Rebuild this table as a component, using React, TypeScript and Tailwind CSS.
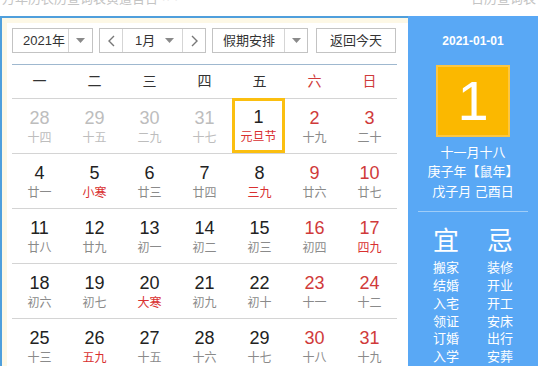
import { clsx as cn } from "clsx";

type Day = { d: number; l: string; muted?: boolean; red?: boolean; term?: boolean; selected?: boolean };

const weeks: Day[][] = [
  [
    { d: 28, l: "十四", muted: true },
    { d: 29, l: "十五", muted: true },
    { d: 30, l: "二九", muted: true },
    { d: 31, l: "十七", muted: true },
    { d: 1, l: "元旦节", term: true, selected: true },
    { d: 2, l: "十九", red: true },
    { d: 3, l: "二十", red: true },
  ],
  [
    { d: 4, l: "廿一" },
    { d: 5, l: "小寒", term: true },
    { d: 6, l: "廿三" },
    { d: 7, l: "廿四" },
    { d: 8, l: "三九", term: true },
    { d: 9, l: "廿六", red: true },
    { d: 10, l: "廿七", red: true },
  ],
  [
    { d: 11, l: "廿八" },
    { d: 12, l: "廿九" },
    { d: 13, l: "初一" },
    { d: 14, l: "初二" },
    { d: 15, l: "初三" },
    { d: 16, l: "初四", red: true },
    { d: 17, l: "四九", red: true, term: true },
  ],
  [
    { d: 18, l: "初六" },
    { d: 19, l: "初七" },
    { d: 20, l: "大寒", term: true },
    { d: 21, l: "初九" },
    { d: 22, l: "初十" },
    { d: 23, l: "十一", red: true },
    { d: 24, l: "十二", red: true },
  ],
  [
    { d: 25, l: "十三" },
    { d: 26, l: "五九", term: true },
    { d: 27, l: "十五" },
    { d: 28, l: "十六" },
    { d: 29, l: "十七" },
    { d: 30, l: "十八", red: true },
    { d: 31, l: "十九", red: true },
  ],
];

const weekdays = ["一", "二", "三", "四", "五", "六", "日"];
const yi = ["搬家", "结婚", "入宅", "领证", "订婚", "入学"];
const ji = ["装修", "开业", "开工", "安床", "出行", "安葬"];

function Caret() {
  return (
    <svg width="9" height="5" viewBox="0 0 9 5">
      <polygon points="0,0 9,0 4.5,5" fill="#8a8a8a" />
    </svg>
  );
}

function Chevron({ dir }: { dir: "left" | "right" }) {
  return (
    <svg width="7" height="12" viewBox="0 0 7 12">
      <polyline
        points={dir === "left" ? "6,1 1,6 6,11" : "1,1 6,6 1,11"}
        fill="none"
        stroke="#777"
        strokeWidth="1.4"
      />
    </svg>
  );
}

export default function App() {
  return (
    <div
      className="relative h-[366px] w-[538px] overflow-hidden bg-white text-[#333]"
      style={{ fontFamily: '"Liberation Sans", "Noto Sans CJK SC", sans-serif' }}
    >
      <div className="h-[16px] overflow-hidden">
        <div className="-mt-[11px] flex justify-between px-[2px] text-[13px] text-[#c4c4c4]">
          <span>万年历农历查询表黄道吉日 ·· ·</span>
          <span>日历查询表</span>
        </div>
      </div>

      <div className="flex h-[350px]">
        <div className="w-[408px] border-l-2 border-t-2 border-[#4f9fdc] bg-[#fdf8e6] pl-[5px] pt-[5px]">
          <div className="h-full bg-white pl-[5px] pr-[4px] pt-[5px]">
            <div className="flex h-[25px] items-stretch gap-[6px] text-[13px]">
              <div className="flex w-[81px] border border-[#c3c3c3]">
                <span className="flex flex-1 items-center pl-[10px]">2021年</span>
                <span className="flex w-[24px] items-center justify-center border-l border-[#d5d5d5]">
                  <Caret />
                </span>
              </div>
              <div className="flex w-[107px] border border-[#c3c3c3]">
                <span className="flex w-[23px] items-center justify-center border-r border-[#d5d5d5]">
                  <Chevron dir="left" />
                </span>
                <span className="flex flex-1 items-center justify-between pl-[12px] pr-[8px]">
                  1月
                  <Caret />
                </span>
                <span className="flex w-[23px] items-center justify-center border-l border-[#d5d5d5]">
                  <Chevron dir="right" />
                </span>
              </div>
              <div className="flex w-[96px] border border-[#c3c3c3]">
                <span className="flex flex-1 items-center pl-[10px]">假期安排</span>
                <span className="flex w-[23px] items-center justify-center border-l border-[#d5d5d5]">
                  <Caret />
                </span>
              </div>
              <div className="ml-[2px] flex w-[80px] items-center justify-center border border-[#c3c3c3]">
                返回今天
              </div>
            </div>

            <div className="mt-[11px] w-[385px] border-t border-[#9fb8cf]">
              <div className="grid h-[33px] grid-cols-7 items-center text-[14px]">
                {weekdays.map((w, i) => (
                  <span key={w} className={cn("text-center", i > 4 ? "text-[#cf3a3a]" : "text-[#333]")}>
                    {w}
                  </span>
                ))}
              </div>
              {weeks.map((week, wi) => (
                <div key={wi} className="grid h-[55px] grid-cols-7 border-t border-[#d4d4d4]">
                  {week.map((day) => (
                    <div
                      key={`${wi}-${day.d}`}
                      className={cn(
                        "flex flex-col items-center",
                        day.selected ? "-mt-px mr-[2px] border-[3px] border-[#fbbf10] pt-[5px]" : "pt-[8px]",
                      )}
                    >
                      <span
                        className={cn(
                          "text-[18px] leading-[22px]",
                          day.muted ? "text-[#bdbdbd]" : day.red ? "text-[#d03a3a]" : "text-[#222]",
                        )}
                      >
                        {day.d}
                      </span>
                      <span
                        className={cn(
                          "text-[12px] leading-[18px]",
                          day.term ? "text-[#d93030]" : day.muted ? "text-[#bdbdbd]" : "text-[#8a8a8a]",
                        )}
                      >
                        {day.l}
                      </span>
                    </div>
                  ))}
                </div>
              ))}
            </div>
          </div>
        </div>

        <div className="flex w-[130px] flex-col items-center bg-[#59a8f5] text-white">
          <div className="mt-[17px] text-[12px] font-bold leading-[16px]">2021-01-01</div>
          <div className="mt-[16px] flex h-[75px] w-[74px] items-center justify-center bg-[#fbb800] shadow-[inset_0_0_0_2px_#fdc640]">
            <span className="text-[56px] font-light leading-none">1</span>
          </div>
          <div className="mt-[6px] text-center text-[13px] leading-[19.5px]">
            <div>十一月十八</div>
            <div>庚子年【鼠年】</div>
            <div>戊子月 己酉日</div>
          </div>
          <div className="mt-[10px] h-px w-[110px] bg-[#9fcdf8]" />
          <div className="mt-[13px] flex gap-[26px]">
            {[
              { t: "宜", items: yi },
              { t: "忌", items: ji },
            ].map((col) => (
              <div key={col.t} className="flex w-[28px] flex-col items-center">
                <span className="text-[26px] leading-[32px]">{col.t}</span>
                <div className="mt-[2px] text-[13px] leading-[17.8px]">
                  {col.items.map((it) => (
                    <div key={it}>{it}</div>
                  ))}
                </div>
              </div>
            ))}
          </div>
        </div>
      </div>
    </div>
  );
}
